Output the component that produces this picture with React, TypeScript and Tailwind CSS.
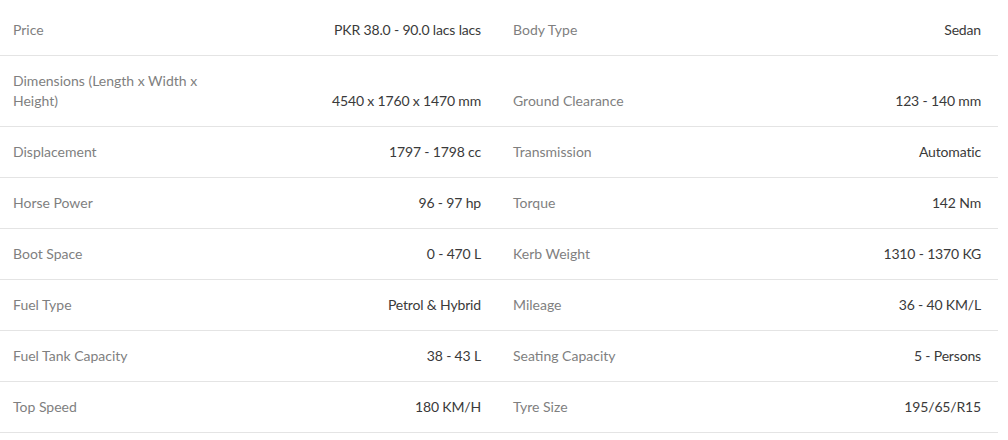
import React from "react";

const rows: [string, string, string, string][] = [
  ["Price", "PKR 38.0 - 90.0 lacs lacs", "Body Type", "Sedan"],
  ["Dimensions (Length x Width x Height)", "4540 x 1760 x 1470 mm", "Ground Clearance", "123 - 140 mm"],
  ["Displacement", "1797 - 1798 cc", "Transmission", "Automatic"],
  ["Horse Power", "96 - 97 hp", "Torque", "142 Nm"],
  ["Boot Space", "0 - 470 L", "Kerb Weight", "1310 - 1370 KG"],
  ["Fuel Type", "Petrol & Hybrid", "Mileage", "36 - 40 KM/L"],
  ["Fuel Tank Capacity", "38 - 43 L", "Seating Capacity", "5 - Persons"],
  ["Top Speed", "180 KM/H", "Tyre Size", "195/65/R15"],
];

export default function App() {
  return (
    <div className="w-[998px] bg-white pt-[5px] text-[14px] leading-[20px]" style={{ fontFamily: "Lato, 'Open Sans', sans-serif" }}>
      {rows.map((r, i) => (
        <div key={i} className="grid grid-cols-2 border-b border-[#e4e4e4]">
          <div className="flex items-end justify-between gap-4 py-[15px] pl-[13px] pr-[18px]">
            <span className="text-[#7f7f7f] max-w-[200px]">{r[0]}</span>
            <span className="text-[#3a3a3a] whitespace-nowrap tracking-[-0.16px]">{r[1]}</span>
          </div>
          <div className="flex items-end justify-between gap-4 py-[15px] pl-[14px] pr-[17px]">
            <span className="text-[#7f7f7f]">{r[2]}</span>
            <span className="text-[#3a3a3a] whitespace-nowrap tracking-[-0.16px]">{r[3]}</span>
          </div>
        </div>
      ))}
    </div>
  );
}
